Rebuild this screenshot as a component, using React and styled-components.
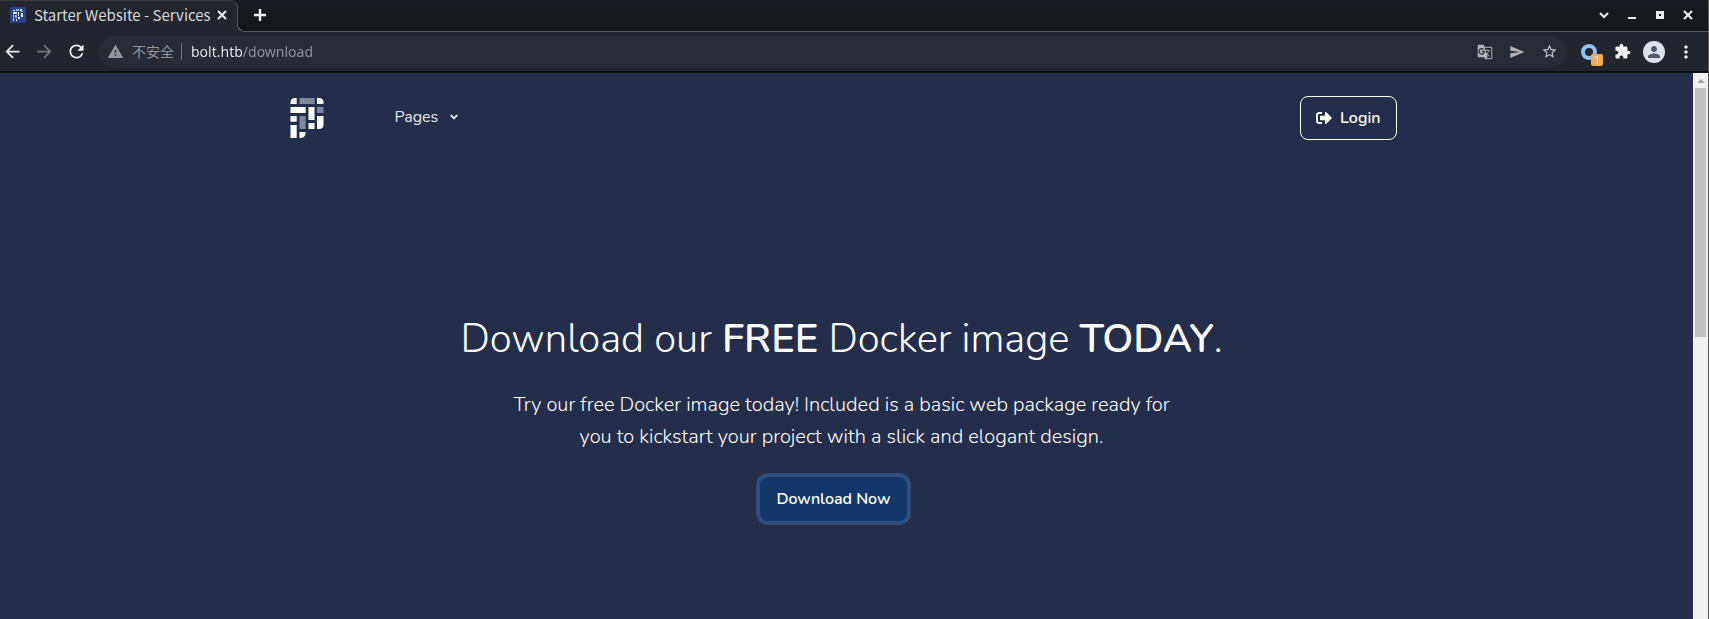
import React, { useState } from "react";
import styled, { createGlobalStyle } from "styled-components";
import {
  MdArrowBack,
  MdArrowForward,
  MdRefresh,
  MdWarning,
  MdGTranslate,
  MdSend,
  MdStarBorder,
  MdExtension,
  MdPerson,
  MdMoreVert,
} from "react-icons/md";
import { FaSignOutAlt, FaAngleDown } from "react-icons/fa";

const ui = '"Noto Sans", "Noto Sans CJK SC", sans-serif';
const brand = 'Nunito, Lato, "Noto Sans", sans-serif';

const GlobalStyle = createGlobalStyle`
  *, *::before, *::after { box-sizing: border-box; }
  body { margin: 0; background: #242e4b; }
  button, input { font: inherit; }
`;

const Frame = styled.div`
  display: flex;
  flex-direction: column;
  height: 100vh;
  overflow: hidden;
  border-right: 1px solid #5a5a5c;
  font-family: ${ui};
`;

const TabStrip = styled.header`
  display: flex;
  align-items: stretch;
  height: 32px;
  flex: none;
  background: linear-gradient(#191a1f, #16171b);
`;

const Tab = styled.div`
  display: flex;
  align-items: center;
  width: 238px;
  padding: 0 10px 3px;
  gap: 8px;
  background: #23252d;
  border-right: 1px solid #55565a;
  border-top: 1px solid #3a3b40;
  border-top-right-radius: 8px;
`;

const TabTitle = styled.span`
  flex: 1;
  min-width: 0;
  font-family: "Noto Sans CJK SC", "Noto Sans", sans-serif;
  font-size: 15px;
  line-height: 20px;
  white-space: nowrap;
  color: #d6d8db;
`;

const TabCurve = styled.div`
  align-self: flex-end;
  width: 8px;
  height: 8px;
  margin-left: -1px;
  background: radial-gradient(circle at 100% 0, #16171b 7px, #55565a 7px, #55565a 8px, #23252d 8px);
`;

const StripRest = styled.div`
  flex: 1;
  display: flex;
  align-items: center;
  justify-content: space-between;
  padding: 0 8px 2px 3px;
  border-bottom: 1px solid #55565a;
`;

const WindowControls = styled.div`
  display: flex;
  gap: 4px;
`;

const IconButton = styled.button`
  display: inline-flex;
  align-items: center;
  justify-content: center;
  flex: none;
  width: ${(p) => p.$size || 24}px;
  height: ${(p) => p.$size || 24}px;
  padding: 0;
  border: 0;
  background: none;
  color: ${(p) => p.$color || "#eceef0"};
`;

const Toolbar = styled.nav`
  display: flex;
  align-items: center;
  height: 41px;
  flex: none;
  padding-right: 10px;
  background: #23252d;
  border-bottom: 2px solid #0d0e11;
`;

const Navigation = styled.div`
  display: flex;
  gap: 8px;
  margin-right: 10px;
`;

const AddressBar = styled.form`
  display: flex;
  flex: 1;
  align-items: center;
  height: 32px;
  padding: 0 6px 0 9px;
  border-radius: 16px;
  background: #282a34;
`;

const Security = styled.button`
  display: flex;
  align-items: center;
  gap: 8px;
  margin-right: 9px;
  padding: 0 7px 0 0;
  border: 0;
  border-right: 1px solid #74767c;
  background: none;
  font-size: 14px;
  line-height: 16px;
  color: #94969b;
`;

/* The host is brighter than the path that follows it. */
const AddressInput = styled.input`
  flex: 1;
  min-width: 0;
  padding: 0;
  border: 0;
  outline: 0;
  font-size: 14px;
  line-height: 20px;
  color: #94969b;
  background: linear-gradient(90deg, #eceef0 52px, #94969b 52px);
  background-clip: text;
  -webkit-text-fill-color: transparent;
`;

const AddressActions = styled.div`
  display: flex;
  gap: 8px;
`;

const Extensions = styled.div`
  display: flex;
  align-items: center;
  gap: 9px;
  margin-left: 10px;
`;

const Ring = styled.span`
  width: 16px;
  height: 16px;
  border: 4px solid #8fc4ee;
  border-radius: 50%;
`;

const ExtensionButton = styled(IconButton)`
  position: relative;
`;

const Badge = styled.span`
  position: absolute;
  right: -2px;
  bottom: -2px;
  width: 12px;
  height: 12px;
  border-radius: 2px;
  background: #f0ad4e;
  color: #fff;
  font-size: 10px;
  line-height: 12px;
  text-align: center;
`;

const Avatar = styled(IconButton)`
  width: 22px;
  height: 22px;
  border-radius: 50%;
  background: #dee2e8;
  color: #4d586a;
`;

const Viewport = styled.div`
  display: flex;
  flex: 1;
  min-height: 0;
`;

const Page = styled.main`
  flex: 1;
  min-width: 0;
  padding-right: 10px;
  background: #242e4b;
  color: #fff;
  font-family: ${brand};
  overflow: hidden;
`;

const SiteHeader = styled.header`
  display: flex;
  align-items: center;
  max-width: 1110px;
  margin: 0 auto;
  padding: 23px 0 0 3px;
`;

const LogoLink = styled.a`
  display: block;
  height: 40px;
  margin-right: 71px;
`;

const MenuButton = styled.button`
  display: flex;
  align-items: center;
  gap: 10px;
  margin-right: auto;
  padding: 0 0 2px;
  border: 0;
  background: none;
  color: #e4e6eb;
  font-size: 16px;
  line-height: 24px;
`;

const LoginLink = styled.a`
  display: flex;
  align-items: center;
  gap: 8px;
  height: 44px;
  padding: 0 15px;
  border: 1px solid #fff;
  border-radius: 8px;
  color: #fff;
  font-size: 16px;
  font-weight: 600;
  text-decoration: none;
`;

const Hero = styled.section`
  display: flex;
  flex-direction: column;
  align-items: center;
  padding-top: 175px;
  text-align: center;
`;

const Title = styled.h1`
  margin: 0;
  font-size: 40px;
  font-weight: 300;
  line-height: 48px;

  strong { font-weight: 600; }
`;

const Lead = styled.p`
  max-width: 680px;
  margin: 26px 0 0;
  font-size: 20px;
  font-weight: 300;
  line-height: 32px;
`;

const DownloadButton = styled.button`
  height: 44px;
  margin: 24px 16px 0 0;
  padding: 0 16px;
  border: 0;
  border-radius: 8px;
  background: #12386a;
  box-shadow: 0 0 0 4px #2f4d7f;
  color: #fff;
  font-size: 16px;
  font-weight: 600;
`;

const Scrollbar = styled.div`
  display: flex;
  flex-direction: column;
  align-items: center;
  width: 15px;
  background: #f0f0f0;
`;

const ScrollUp = styled.button`
  display: flex;
  align-items: center;
  justify-content: center;
  width: 100%;
  height: 15px;
  padding: 0;
  border: 0;
  background: none;
`;

const Thumb = styled.div`
  width: 11px;
  height: 249px;
  background: #c1c1c1;
`;

const Logo = () => (
  <svg width="34" height="40" viewBox="0 0 34 40" fill="#fff" aria-hidden="true">
    <path d="M.5 6V4.500Q.5 0 5 0H6.700V6Z" />
    <path d="M27 0H29Q33.500 0 33.500 4.500V6H27Z" />
    <path d="M.5 9H15.700V15H.5ZM18.500 9H24.500V22H18.500ZM.5 18H6.700V23.700H.5ZM18.500 25H24.500V31H18.500ZM.5 27H6.700V40H.5Z" />
    <path d="M27 18H33.500V26.500Q33.500 31 29 31H27ZM9.500 34H15.700Q15.700 40 10 40H9.500Z" />
    <path fill="#80879a" d="M9.500 0H24.700V6H9.500ZM27 9H33.500V15H27ZM9.500 18H15.700V31H9.500Z" />
  </svg>
);

const Favicon = () => (
  <svg width="16" height="16" viewBox="0 0 16 16" aria-hidden="true">
    <rect width="16" height="16" rx="1" fill="#26458c" />
    <path fill="#e9eefb" d="M3 3H5V4H3ZM10 2H12V4H10ZM3 5H7V7H3ZM8 5H9V9H8ZM11 6H13V10H11ZM3 8H4V10H3ZM8 10H10V12H8ZM3 11H4V14H3ZM6 12H7V14H6Z" />
    <path fill="#9db1e0" d="M6 2H9V4H6ZM11 4H13V5H11ZM5 8H7V11H5Z" />
  </svg>
);

const Stroke = ({ d, size = 10, width = 2 }) => (
  <svg width={size} height={size} viewBox="0 0 10 10" fill="none" stroke="currentColor" strokeWidth={width} aria-hidden="true">
    <path d={d} />
  </svg>
);

export default function App() {
  const [address, setAddress] = useState("bolt.htb/download");
  return (
    <>
      <GlobalStyle />
      <Frame>
        <TabStrip>
          <Tab>
            <Favicon />
            <TabTitle>Starter Website - Services</TabTitle>
            <IconButton $size={10} aria-label="Close tab">
              <Stroke d="M1 1L9 9M9 1L1 9" />
            </IconButton>
          </Tab>
          <TabCurve />
          <StripRest>
            <IconButton aria-label="New tab">
              <Stroke d="M5 0V10M0 5H10" size={12} />
            </IconButton>
            <WindowControls>
              <IconButton aria-label="Search tabs"><Stroke d="M1 3L5 7L9 3" /></IconButton>
              <IconButton aria-label="Minimize"><Stroke d="M1 8H9" /></IconButton>
              <IconButton aria-label="Maximize"><Stroke d="M2.500 2.500H7.500V7.500H2.500Z" width={3} /></IconButton>
              <IconButton aria-label="Close window"><Stroke d="M1 1L9 9M9 1L1 9" /></IconButton>
            </WindowControls>
          </StripRest>
        </TabStrip>

        <Toolbar>
          <Navigation>
            <IconButton aria-label="Back"><MdArrowBack size={21} /></IconButton>
            <IconButton aria-label="Forward" $color="#75777c"><MdArrowForward size={21} /></IconButton>
            <IconButton aria-label="Reload"><MdRefresh size={21} /></IconButton>
          </Navigation>
          <AddressBar onSubmit={(e) => e.preventDefault()}>
            <Security type="button">
              <MdWarning size={17} />
              不安全
            </Security>
            <AddressInput aria-label="Address" value={address} onChange={(e) => setAddress(e.target.value)} />
            <AddressActions>
              <IconButton type="button" aria-label="Translate" $color="#b4b4b4"><MdGTranslate size={16} /></IconButton>
              <IconButton type="button" aria-label="Share" $color="#b4b4b4"><MdSend size={16} /></IconButton>
              <IconButton type="button" aria-label="Bookmark" $color="#c8c8c8"><MdStarBorder size={17} /></IconButton>
            </AddressActions>
          </AddressBar>
          <Extensions>
            <ExtensionButton aria-label="Proxy extension">
              <Ring />
              <Badge>1</Badge>
            </ExtensionButton>
            <IconButton aria-label="Extensions"><MdExtension size={17} /></IconButton>
            <Avatar aria-label="Profile"><MdPerson size={18} /></Avatar>
            <IconButton aria-label="Menu"><MdMoreVert size={20} /></IconButton>
          </Extensions>
        </Toolbar>

        <Viewport>
          <Page>
            <SiteHeader>
              <LogoLink href="#" aria-label="Home"><Logo /></LogoLink>
              <MenuButton>
                Pages
                <FaAngleDown size={12} />
              </MenuButton>
              <LoginLink href="#login">
                <FaSignOutAlt size={16} />
                Login
              </LoginLink>
            </SiteHeader>
            <Hero>
              <Title>
                Download our <strong>FREE</strong> Docker image <strong>TODAY</strong>.
              </Title>
              <Lead>
                Try our free Docker image today! Included is a basic web package ready for you to
                kickstart your project with a slick and elogant design.
              </Lead>
              <DownloadButton>Download Now</DownloadButton>
            </Hero>
          </Page>
          <Scrollbar>
            <ScrollUp aria-label="Scroll up">
              <svg width="8" height="4" viewBox="0 0 8 4" fill="#a3a3a3" aria-hidden="true"><path d="M0 4L4 0L8 4Z" /></svg>
            </ScrollUp>
            <Thumb />
          </Scrollbar>
        </Viewport>
      </Frame>
    </>
  );
}
